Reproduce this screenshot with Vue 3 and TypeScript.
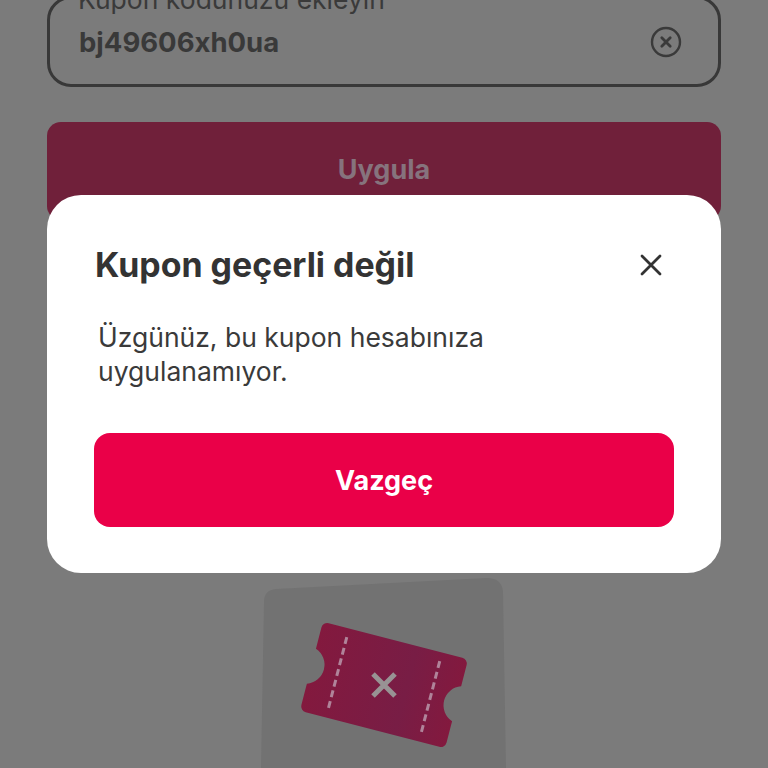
<template>
  <div class="page">
    <div class="field">
      <span class="field-label">Kupon kodunuzu ekleyin</span>
      <span class="field-value">bj49606xh0ua</span>
      <svg class="clear-icon" width="32" height="32" viewBox="0 0 32 32" fill="none" aria-hidden="true">
        <circle cx="16" cy="16" r="14" stroke="#3a3a3a" stroke-width="2.4" />
        <path d="M11.8 11.8 20.2 20.2M20.2 11.8 11.8 20.2" stroke="#3a3a3a" stroke-width="2.8" stroke-linecap="round" />
      </svg>
    </div>

    <div class="apply">Uygula</div>

    <svg class="tile" width="260" height="196" viewBox="0 0 260 196" aria-hidden="true">
      <defs>
        <linearGradient id="ticket-fill" x1="0" y1="0" x2="1" y2="0">
          <stop offset="0" stop-color="#83193e" />
          <stop offset="0.65" stop-color="#781d45" />
          <stop offset="1" stop-color="#83193e" />
        </linearGradient>
      </defs>
      <path d="M10 30Q10 18 22 17L233 6Q248 6 249 20L252 196H7Z" fill="#727272" />
      <g transform="translate(130 113) rotate(14.5)">
        <path
          d="M-69-46H69a6 6 0 0 1 6 6V-21q0 3 0 3a19 19 0 0 0 0 36q0 0 0 3V40a6 6 0 0 1-6 6H-69a6 6 0 0 1-6-6V21q0-3 0-3a19 19 0 0 0 0-36q0 0 0-3V-40a6 6 0 0 1 6-6Z"
          fill="url(#ticket-fill)"
        />
        <path d="M-48-37V37M48-37V37" stroke="#b0849a" stroke-width="3" stroke-dasharray="7 4" fill="none" />
      </g>
      <path d="M119 102 141 124M141 102 119 124" stroke="#989394" stroke-width="5" fill="none" />
    </svg>

    <div class="modal">
      <div class="modal-head">
        <h2 class="modal-title">Kupon geçerli değil</h2>
        <svg class="close-icon" width="24" height="24" viewBox="0 0 24 24" fill="none" aria-hidden="true">
          <path d="M3 3 21 21M21 3 3 21" stroke="#333" stroke-width="2.8" stroke-linecap="round" />
        </svg>
      </div>
      <p class="modal-text">Üzgünüz, bu kupon hesabınıza<br />uygulanamıyor.</p>
      <div class="modal-btn">Vazgeç</div>
    </div>
  </div>
</template>

<script setup lang="ts">
</script>

<style>
html,
body {
  margin: 0;
  background: #7b7b7b;
}
</style>

<style scoped>
.page {
  position: relative;
  box-sizing: border-box;
  height: 768px;
  padding: 0 47px;
  overflow: hidden;
  background: #7b7b7b;
  font-family: Inter, "Liberation Sans", sans-serif;
}

.field {
  box-sizing: border-box;
  display: flex;
  align-items: center;
  justify-content: space-between;
  position: relative;
  height: 91px;
  margin-top: -4px;
  padding: 0 36px 0 29px;
  border: 3px solid #383838;
  border-radius: 24px;
}

.field-label {
  position: absolute;
  left: 28px;
  top: -13px;
  padding-right: 4px;
  background: #7b7b7b;
  color: #3a3a3a;
  font-size: 26.5px;
  line-height: 26px;
}

.field-value {
  color: #393939;
  font-size: 27.5px;
  font-weight: 700;
}

.clear-icon {
  display: block;
}

.apply {
  display: flex;
  justify-content: center;
  box-sizing: border-box;
  height: 98px;
  margin-top: 35px;
  padding-top: 31px;
  border-radius: 14px;
  background: #70203a;
  color: #86737d;
  font-size: 27px;
  font-weight: 700;
  line-height: 34px;
}

.tile {
  display: block;
  margin: 352px auto 0;
}

.modal {
  position: absolute;
  left: 47px;
  top: 195px;
  box-sizing: border-box;
  width: 674px;
  height: 378px;
  padding: 47px 47px 47px 48px;
  border-radius: 34px;
  background: #fff;
}

.modal-head {
  display: flex;
  align-items: center;
  justify-content: space-between;
  height: 46px;
}

.modal-title {
  margin: 0;
  color: #333;
  font-size: 33.9px;
  font-weight: 700;
  line-height: 46px;
}

.close-icon {
  display: block;
  margin-right: 11px;
}

.modal-text {
  margin: 32px 0 0 3px;
  color: #3a3a3a;
  font-size: 26.5px;
  line-height: 34px;
}

.modal-btn {
  display: flex;
  align-items: center;
  justify-content: center;
  height: 94px;
  margin: 45px 0 0 -1px;
  border-radius: 16px;
  background: #ea0048;
  color: #fff;
  font-size: 27px;
  font-weight: 700;
}
</style>
